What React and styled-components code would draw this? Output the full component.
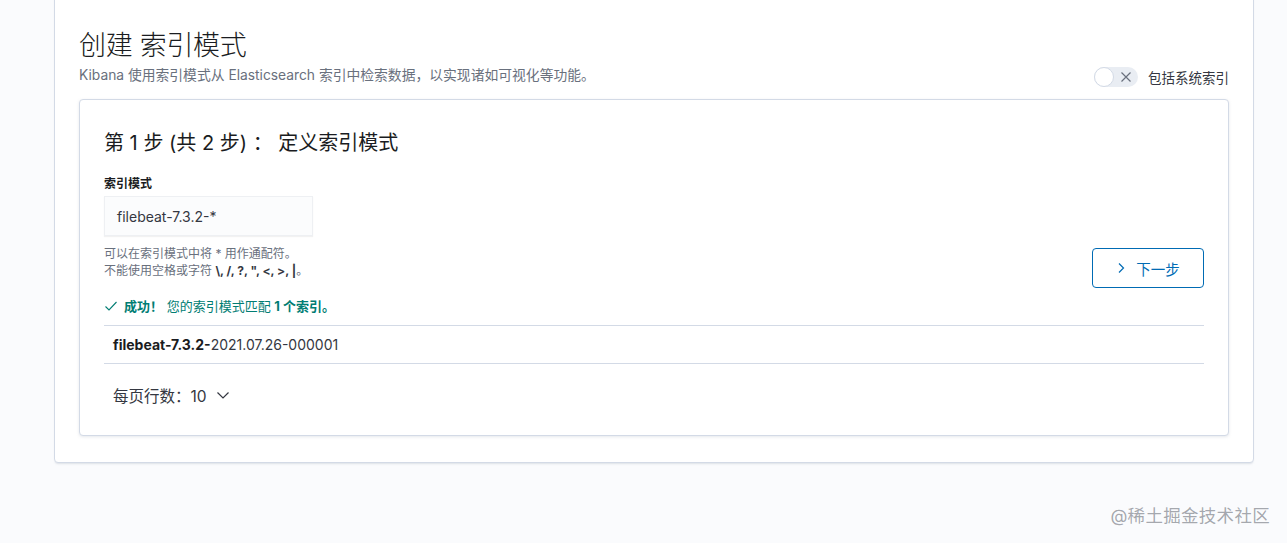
import React from "react";
import styled, { createGlobalStyle } from "styled-components";

const GlobalStyle = createGlobalStyle`
  html, body {
    margin: 0;
    padding: 0;
    background: #fafbfd;
    font-family: "Inter", "Noto Sans CJK SC", sans-serif;
    color: #343741;
  }
`;

const Page = styled.div`
  position: relative;
  width: 1287px;
  height: 543px;
  overflow: hidden;
  padding: 0 33px 0 54px;
  box-sizing: border-box;
`;

const Panel = styled.div`
  margin-top: -10px;
  background: #fff;
  border: 1px solid #d3dae6;
  border-radius: 0 0 4px 4px;
  box-shadow: 0 2px 2px -1px rgba(152, 162, 179, 0.3);
  padding: 38px 24px 24px 24px;
  height: 473px;
  box-sizing: border-box;
`;

const Header = styled.div`
  display: flex;
  align-items: flex-end;
  justify-content: space-between;
  padding-bottom: 15px;
`;

const Title = styled.h1`
  margin: 0;
  font-size: 27px;
  font-weight: 300;
  line-height: 34px;
  color: #1a1c21;
  letter-spacing: -0.3px;
`;

const Subtitle = styled.p`
  margin: 3px 0 0;
  font-size: 13.8px;
  line-height: 18px;
  color: #69707d;
`;

const ToggleWrap = styled.label`
  display: flex;
  align-items: center;
  gap: 10px;
  font-size: 13.5px;
  color: #343741;
  margin-bottom: -3px;
`;

const Switch = styled.span`
  position: relative;
  display: inline-flex;
  align-items: center;
  justify-content: flex-end;
  width: 44px;
  height: 20px;
  border-radius: 10px;
  background: #e9edf3;
  padding-right: 6px;
  box-sizing: border-box;
`;

const Knob = styled.span`
  position: absolute;
  left: 0;
  top: 0;
  width: 20px;
  height: 20px;
  border-radius: 50%;
  background: #fff;
  border: 1px solid #d3dae6;
  box-sizing: border-box;
`;

const Card = styled.div`
  background: #fff;
  border: 1px solid #d3dae6;
  border-radius: 4px;
  box-shadow: 0 1px 3px rgba(152, 162, 179, 0.25);
  padding: 29px 24px 26px 24px;
  height: 337px;
  box-sizing: border-box;
`;

const StepTitle = styled.h2`
  margin: 0;
  font-size: 20px;
  font-weight: 400;
  line-height: 28px;
  color: #1a1c21;
`;

const FormRow = styled.div`
  display: flex;
  align-items: flex-end;
  justify-content: space-between;
  margin-top: 19px;
`;

const Field = styled.div`
  display: flex;
  flex-direction: column;
`;

const Label = styled.div`
  font-size: 12px;
  font-weight: 700;
  line-height: 16px;
  color: #1a1c21;
  margin-bottom: 4px;
`;

const Input = styled.div`
  width: 209px;
  height: 40px;
  box-sizing: border-box;
  background: #fbfcfd;
  border: 1px solid #eef0f3;
  box-shadow: 0 1px 1px rgba(0, 0, 0, 0.05);
  padding: 0 12px;
  display: flex;
  align-items: center;
  font-size: 14px;
  color: #343741;
`;

const Help = styled.div`
  margin-top: 9px;
  font-size: 12px;
  line-height: 17px;
  color: #69707d;
  b {
    color: #343741;
    font-weight: 700;
  }
`;

const NextButton = styled.button`
  display: flex;
  align-items: center;
  justify-content: center;
  gap: 10px;
  width: 112px;
  height: 40px;
  margin-bottom: -9px;
  border: 1px solid #006bb4;
  border-radius: 4px;
  background: #fff;
  color: #006bb4;
  font-family: inherit;
  font-size: 14.5px;
`;

const Success = styled.div`
  display: flex;
  align-items: center;
  gap: 6px;
  margin-top: 18px;
  font-size: 13px;
  line-height: 18px;
  color: #017d73;
  b {
    font-weight: 700;
  }
`;

const Table = styled.div`
  margin-top: 10px;
  border-top: 1px solid #d3dae6;
  border-bottom: 1px solid #d3dae6;
`;

const Row = styled.div`
  height: 37px;
  display: flex;
  align-items: center;
  padding-left: 9px;
  font-size: 14px;
  color: #343741;
  b {
    font-weight: 700;
    color: #1a1c21;
  }
`;

const Pager = styled.div`
  display: flex;
  align-items: center;
  gap: 9px;
  margin-top: 20px;
  padding-left: 9px;
  font-size: 15.5px;
  color: #343741;
`;

const Watermark = styled.div`
  position: absolute;
  right: 17px;
  bottom: 16px;
  font-size: 17.5px;
  color: rgba(90, 95, 105, 0.55);
  letter-spacing: 0.3px;
`;

const Cross = () => (
  <svg width="12" height="12" viewBox="0 0 12 12">
    <path d="M1.5 1.5l9 9M10.5 1.5l-9 9" stroke="#69707d" strokeWidth="1.2" fill="none" />
  </svg>
);

const ChevronRight = () => (
  <svg width="10" height="12" viewBox="0 0 10 12">
    <path d="M3 1.5l4.5 4.5L3 10.5" stroke="#006bb4" strokeWidth="1.2" fill="none" />
  </svg>
);

const Check = () => (
  <svg width="14" height="12" viewBox="0 0 14 12">
    <path d="M1.5 6.5l3.5 3.5 7.5-8" stroke="#017d73" strokeWidth="1.1" fill="none" />
  </svg>
);

const ChevronDown = () => (
  <svg width="14" height="10" viewBox="0 0 14 10">
    <path d="M1.5 2.5l5.5 5.5 5.5-5.5" stroke="#343741" strokeWidth="1.2" fill="none" />
  </svg>
);

export default function App() {
  return (
    <>
      <GlobalStyle />
      <Page>
        <Panel>
          <Header>
            <div>
              <Title>创建 索引模式</Title>
              <Subtitle>
                Kibana 使用索引模式从 Elasticsearch 索引中检索数据，以实现诸如可视化等功能。
              </Subtitle>
            </div>
            <ToggleWrap>
              <Switch>
                <Knob />
                <Cross />
              </Switch>
              包括系统索引
            </ToggleWrap>
          </Header>
          <Card>
            <StepTitle>第 1 步 (共 2 步) ： 定义索引模式</StepTitle>
            <FormRow>
              <Field>
                <Label>索引模式</Label>
                <Input>filebeat-7.3.2-*</Input>
                <Help>
                  可以在索引模式中将 * 用作通配符。
                  <br />
                  不能使用空格或字符 <b>\, /, ?, ", &lt;, &gt;, |</b>。
                </Help>
              </Field>
              <NextButton>
                <ChevronRight />
                下一步
              </NextButton>
            </FormRow>
            <Success>
              <Check />
              <span>
                <b>成功！</b> 您的索引模式匹配 <b>1 个索引。</b>
              </span>
            </Success>
            <Table>
              <Row>
                <b>filebeat-7.3.2-</b>2021.07.26-000001
              </Row>
            </Table>
            <Pager>
              每页行数：10
              <ChevronDown />
            </Pager>
          </Card>
        </Panel>
        <Watermark>@稀土掘金技术社区</Watermark>
      </Page>
    </>
  );
}
